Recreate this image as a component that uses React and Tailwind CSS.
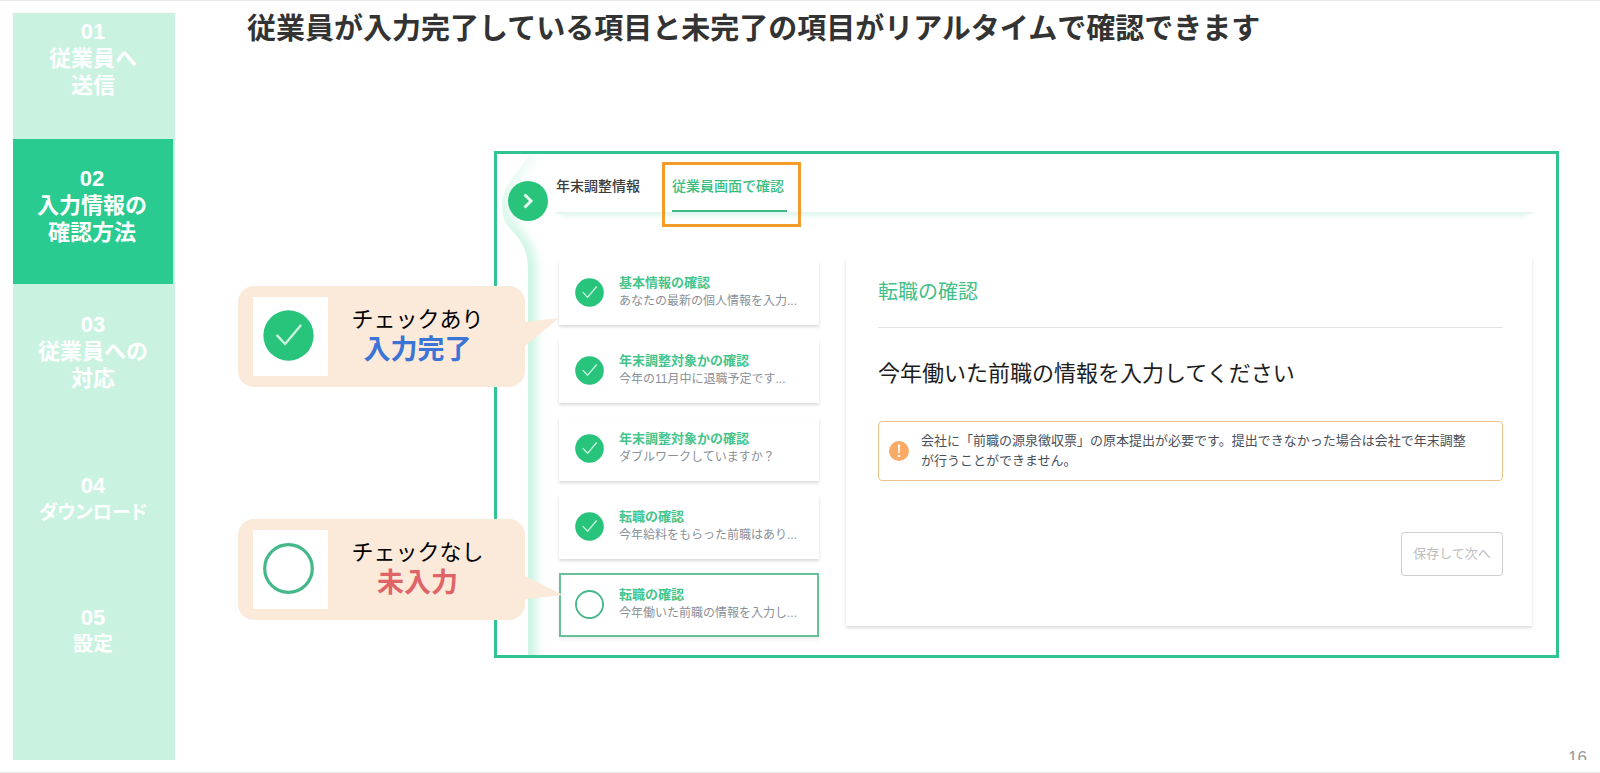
const steps = [
    { no: '01', lines: ['従業員へ', '送信'], box: 'h-[126px] pt-[5px]', text: 'text-[22px]' },
    { no: '02', lines: ['入力情報の', '確認方法'], box: 'h-[145px] pt-[26px] mr-0.5 bg-[#2acb90]', text: 'text-[22px]', active: true },
    { no: '03', lines: ['従業員への', '対応'], box: 'h-[161px] pt-[27px]', text: 'text-[22px]' },
    { no: '04', lines: ['ダウンロード'], box: 'h-[133px] pt-[27px]', text: 'text-[19px] [font-feature-settings:"palt"]' },
    { no: '05', lines: ['設定'], box: 'pt-[26px]', text: 'text-[20px]' },
];

const tasks = [
    { title: '基本情報の確認', detail: 'あなたの最新の個人情報を入力...', done: true },
    { title: '年末調整対象かの確認', detail: '今年の11月中に退職予定です...', done: true },
    { title: '年末調整対象かの確認', detail: 'ダブルワークしていますか？', done: true },
    { title: '転職の確認', detail: '今年給料をもらった前職はあり...', done: true },
    { title: '転職の確認', detail: '今年働いた前職の情報を入力し...', done: false },
];

function StatusIcon({ done, className }) {
    return (
        <svg viewBox="0 0 30 30" fill="none" className={className} aria-hidden="true">
            {done ? (
                <>
                    <circle cx="15" cy="15" r="14.8" fill="#29c47c" />
                    <path d="M8 14.6 L13 20 L22.4 8.8" stroke="#c9f5df" strokeWidth="1.4" />
                </>
            ) : (
                <circle cx="15" cy="15" r="14" fill="#fff" stroke="#45b88a" strokeWidth="1.9" />
            )}
        </svg>
    );
}

function Sidebar() {
    return (
        <aside className="ml-[13px] w-[162px] shrink-0 bg-[#c9f2e1]">
            <ol>
                {steps.map((step) => (
                    <li key={step.no} className={step.box}>
                        <a
                            href={`#step-${step.no}`}
                            aria-current={step.active ? 'step' : undefined}
                            className="block pr-0.5 text-center font-bold leading-[27px] text-white"
                        >
                            <span className="block text-[22px]">{step.no}</span>
                            {step.lines.map((line) => (
                                <span key={line} className={`block ${step.text}`}>{line}</span>
                            ))}
                        </a>
                    </li>
                ))}
            </ol>
        </aside>
    );
}

function Callout({ done, label, status, statusClass, tail, tailClass }) {
    return (
        <div className="relative flex h-[101px] items-center rounded-[16px] bg-[#fbe9da] pl-[15px]">
            <div className="flex h-[79px] w-[75px] shrink-0 items-center justify-center bg-white pb-0.5 pr-1">
                <StatusIcon done={done} className="size-[51px]" />
            </div>
            <div className="flex-1 pb-1 pr-[18px] text-center">
                <p className="text-[22px] leading-[30px] text-black">{label}</p>
                <p className={`text-[27px] font-bold leading-[30px] ${statusClass}`}>{status}</p>
            </div>
            <svg viewBox="0 0 40 30" className={`absolute left-full h-[30px] w-10 ${tailClass}`} aria-hidden="true">
                <path d={tail} fill="#fbe9da" />
            </svg>
        </div>
    );
}

function Rail() {
    return (
        <div className="relative w-[59px] shrink-0 overflow-hidden pl-[11px] pt-[27px]">
            <svg className="absolute left-0 top-0 h-full w-full" aria-hidden="true">
                <defs>
                    <clipPath id="rail-clip">
                        <path d="M36 -10 C28 16 5 26 5 52 C5 82 31 76 31 116 V1200 H70 V-20 Z" />
                    </clipPath>
                    <filter id="rail-blur" x="-60%" y="-10%" width="220%" height="120%">
                        <feGaussianBlur stdDeviation="6" />
                    </filter>
                    <linearGradient id="rail-fade" gradientUnits="userSpaceOnUse" x1="0" y1="0" x2="0" y2="110">
                        <stop offset="0" stopColor="#c0f2dc" stopOpacity="0.25" />
                        <stop offset="1" stopColor="#c0f2dc" />
                    </linearGradient>
                </defs>
                <g clipPath="url(#rail-clip)">
                    <path
                        d="M36 -10 C28 16 5 26 5 52 C5 82 31 76 31 116 V1200"
                        fill="none"
                        stroke="url(#rail-fade)"
                        strokeWidth="14"
                        filter="url(#rail-blur)"
                    />
                </g>
            </svg>
            <button
                type="button"
                aria-label="メニューを開く"
                className="relative flex size-10 items-center justify-center rounded-full bg-[#29c47c]"
            >
                <svg viewBox="0 0 40 40" fill="none" className="size-10" aria-hidden="true">
                    <path d="M16.5 13.5 L23 20 L16.5 26.5" stroke="#e4faef" strokeWidth="3" />
                </svg>
            </button>
        </div>
    );
}

function Tabs() {
    return (
        <nav className="flex gap-8 border-b-2 border-[#e4f6ef] text-sm font-medium leading-5 shadow-[0_7px_5px_-5px_#dcf7ec]">
            <a href="#info" className="pb-4 pt-[22px] text-[#3c3c3c]">年末調整情報</a>
            <a href="#preview" aria-current="page" className="relative w-[115px] whitespace-nowrap pt-[22px] text-[#37be82]">
                従業員画面で確認
                <span className="mt-[14px] block h-[2px] bg-[#3fba84]" />
                <span className="absolute -bottom-[15px] -left-[10px] -right-[14px] top-2 border-[3px] border-[#f59b2a]" />
            </a>
        </nav>
    );
}

function TaskCard({ task }) {
    return (
        <li>
            <a
                href="#task"
                className={`flex h-16 items-center gap-[15px] bg-white pb-0.5 pr-2 ${task.done
                    ? 'pl-4 shadow-[0_2px_3px_rgba(0,0,0,0.15)]'
                    : 'border-2 border-[#66c19b] pl-[14px] shadow-[0_2px_4px_rgba(0,0,0,0.08)]'
                    }`}
            >
                <StatusIcon done={task.done} className="size-[29px] shrink-0" />
                <span className="min-w-0">
                    <span className="block text-[13px] font-bold leading-[19px] text-[#45c48b]">{task.title}</span>
                    <span className="block truncate text-[12px] leading-[19px] text-[#8a9097]">{task.detail}</span>
                </span>
            </a>
        </li>
    );
}

function Detail() {
    return (
        <section className="min-w-0 flex-1 bg-white pb-[50px] pl-8 pr-[29px] pt-[21px] shadow-[0_2px_3px_rgba(0,0,0,0.14)]">
            <h2 className="border-b border-[#e3e5e5] pb-[21px] text-xl leading-7 text-[#3fc088]">転職の確認</h2>
            <h3 className="mt-[30px] text-[22px] leading-8 text-[#1c1c1c]">今年働いた前職の情報を入力してください</h3>
            <div className="mt-[31px] flex items-center gap-3 rounded border border-[#eec28d] py-[9px] pl-[10px] pr-4">
                <svg viewBox="0 0 20 20" className="size-5 shrink-0" aria-hidden="true">
                    <circle cx="10" cy="10" r="10" fill="#f9ab66" />
                    <path d="M8.9 3.6 h2.2 l-0.4 8.4 h-1.4 z" fill="#fff" />
                    <circle cx="10" cy="15" r="1.3" fill="#fff" />
                </svg>
                <p className="text-[13px] leading-5 text-[#4a4f5a]">
                    会社に「前職の源泉徴収票」の原本提出が必要です。提出できなかった場合は会社で年末調整
                    <br />
                    が行うことができません。
                </p>
            </div>
            <div className="mt-[51px] flex justify-end">
                <button
                    type="button"
                    disabled
                    className="h-11 w-[102px] rounded border border-[#cfcfcf] text-[13px] leading-5 text-[#bdbdbd]"
                >
                    保存して次へ
                </button>
            </div>
        </section>
    );
}

export default function App() {
    return (
        <div className='flex min-h-screen border-y border-[#e9ebeb] bg-white py-3 font-["Liberation_Sans","Noto_Sans_CJK_JP",sans-serif]'>
            <Sidebar />
            <main className="flex min-w-0 flex-1 flex-col">
                <h1 className="pl-[72px] text-[29px] font-bold leading-8 text-[#333]">
                    従業員が入力完了している項目と未完了の項目がリアルタイムで確認できます
                </h1>
                <div className="mt-[106px] flex pl-[63px] pr-[41px]">
                    <div className="z-10 -mr-[31px] flex w-[287px] shrink-0 flex-col gap-[132px] pt-[135px]">
                        <Callout
                            done
                            label="チェックあり"
                            status="入力完了"
                            statusClass="text-[#3c74d6]"
                            tail="M0 4 L34 0 L0 28 Z"
                            tailClass="top-8"
                        />
                        <Callout
                            label="チェックなし"
                            status="未入力"
                            statusClass="text-[#df6468]"
                            tail="M0 0 L38 19 L0 23 Z"
                            tailClass="top-[57px]"
                        />
                    </div>
                    <div className="flex min-w-0 flex-1 border-[3px] border-[#30c490]">
                        <Rail />
                        <div className="min-w-0 flex-1 pb-[18px] pr-6">
                            <Tabs />
                            <div className="flex items-start gap-[27px] pl-[3px] pt-[43px]">
                                <ul className="flex w-[260px] shrink-0 flex-col gap-[14px] pt-1">
                                    {tasks.map((task) => (
                                        <TaskCard key={task.detail} task={task} />
                                    ))}
                                </ul>
                                <Detail />
                            </div>
                        </div>
                    </div>
                </div>
                <footer className="mt-auto h-3 overflow-hidden pr-[13px] text-right text-[17px] leading-5 text-[#999]">
                    16
                </footer>
            </main>
        </div>
    );
}
